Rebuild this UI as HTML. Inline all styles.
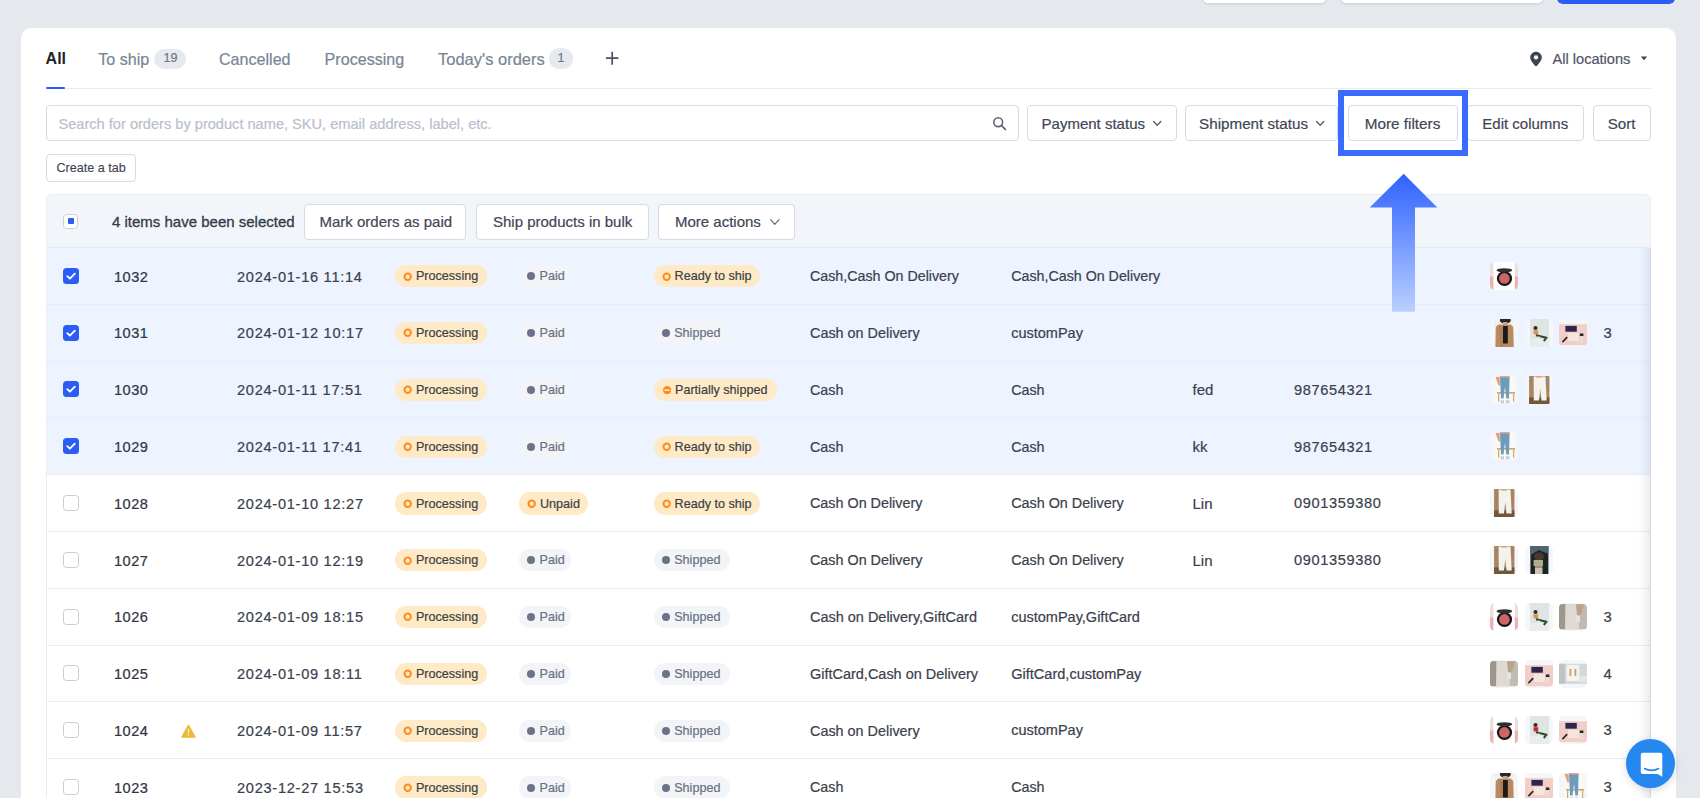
<!DOCTYPE html>
<html><head><meta charset="utf-8"><style>
html,body{margin:0;padding:0;}
body{width:1700px;height:798px;overflow:hidden;position:relative;background:#e5e8ec;font-family:"Liberation Sans",sans-serif;}
.t{position:absolute;line-height:1;white-space:nowrap;}
.pill{position:absolute;background:#e6e9ef;border-radius:10px;}
.box{position:absolute;background:#fff;border:1px solid #d5dae3;border-radius:4px;box-sizing:border-box;}
.bdg{position:absolute;height:22.3px;border-radius:11.2px;}
.th{position:absolute;width:28px;height:28px;border-radius:5px;overflow:hidden;}
.th svg{display:block}
</style></head><body>
<div style="position:absolute;left:1201.5px;top:-30px;width:125px;height:33.8px;background:#fff;border:1px solid #d3d8e1;border-radius:6px;box-sizing:border-box;box-shadow:0 1px 1px rgba(0,0,0,.06)"></div>
<div style="position:absolute;left:1339.7px;top:-30px;width:204.5px;height:33.8px;background:#fff;border:1px solid #d3d8e1;border-radius:6px;box-sizing:border-box;box-shadow:0 1px 1px rgba(0,0,0,.06)"></div>
<div style="position:absolute;left:1557.4px;top:-30px;width:118px;height:34px;background:#2b5cf6;border-radius:6px"></div>
<div style="position:absolute;left:21px;top:28px;width:1655px;height:900px;background:#fff;border-radius:10px"></div>
<div class="t" style="left:45.60px;top:51.46px;font-size:16px;color:#1f2329;font-weight:700;">All</div>
<div class="t" style="left:98.30px;top:50.87px;font-size:16.1px;color:#7a8497;font-weight:400;-webkit-text-stroke:0.2px #7a8497;">To ship</div>
<div class="pill" style="left:154px;top:48.5px;width:31.5px;height:20px;"></div>
<div class="t" style="left:163.50px;top:51.92px;font-size:12.5px;color:#6f7787;font-weight:400;-webkit-text-stroke:0.2px #6f7787;width:14px;">19</div>
<div class="t" style="left:219.00px;top:50.87px;font-size:16.1px;color:#7a8497;font-weight:400;-webkit-text-stroke:0.2px #7a8497;">Cancelled</div>
<div class="t" style="left:324.60px;top:50.87px;font-size:16.1px;color:#7a8497;font-weight:400;-webkit-text-stroke:0.2px #7a8497;">Processing</div>
<div class="t" style="left:438.00px;top:50.83px;font-size:16.5px;color:#7a8497;font-weight:400;-webkit-text-stroke:0.2px #7a8497;">Today&#39;s orders</div>
<div class="pill" style="left:549.2px;top:48.4px;width:24.3px;height:20.3px;"></div>
<div class="t" style="left:557.50px;top:51.92px;font-size:12.5px;color:#6f7787;font-weight:400;-webkit-text-stroke:0.2px #6f7787;">1</div>
<svg style="position:absolute;left:604px;top:50px" width="17" height="17" viewBox="0 0 17 17"><path d="M8.2 1.7V14.7M1.9 8.2H14.4" stroke="#4b5263" stroke-width="1.7"/></svg>
<div style="position:absolute;left:46px;top:88px;width:1605px;height:1px;background:#e8ebf1"></div>
<div style="position:absolute;left:45.5px;top:86.8px;width:19.5px;height:2.3px;background:#2a5cf7;border-radius:1px"></div>
<svg style="position:absolute;left:1529px;top:50.5px" width="14" height="16" viewBox="0 0 14 16"><path d="M7 0.8C3.8 0.8 1.2 3.3 1.2 6.4C1.2 10.3 7 15.4 7 15.4S12.8 10.3 12.8 6.4C12.8 3.3 10.2 0.8 7 0.8Z" fill="#3e4555"/><circle cx="7" cy="6.4" r="2.1" fill="#fff"/></svg>
<div class="t" style="left:1552.50px;top:52.24px;font-size:14.6px;color:#4f5667;font-weight:400;-webkit-text-stroke:0.2px #4f5667;">All locations</div>
<svg style="position:absolute;left:1640px;top:56px" width="8" height="5" viewBox="0 0 8 5"><path d="M0.8 0.5H7.2L4 4.2Z" fill="#3e4555"/></svg>
<div class="box" style="left:46px;top:105.1px;width:972.5px;height:36.2px;"></div>
<div class="t" style="left:58.50px;top:117.24px;font-size:14.6px;color:#b9c0cc;font-weight:400;-webkit-text-stroke:0.2px #b9c0cc;">Search for orders by product name, SKU, email address, label, etc.</div>
<svg style="position:absolute;left:992px;top:116px" width="15" height="15" viewBox="0 0 15 15"><circle cx="6.2" cy="6.2" r="4.4" fill="none" stroke="#5e6575" stroke-width="1.6"/><path d="M9.4 9.4L13.4 13.4" stroke="#5e6575" stroke-width="1.7" stroke-linecap="round"/></svg>
<div class="box" style="left:1027.2px;top:105.1px;width:149.5px;height:36.2px;"></div>
<div class="t" style="left:1041.60px;top:116.00px;font-size:15.0px;color:#3f4655;font-weight:400;-webkit-text-stroke:0.2px #3f4655;">Payment status</div>
<svg style="position:absolute;left:1152px;top:119.6px" width="10.4" height="7.2" viewBox="0 0 10.4 7.2"><path d="M1.6 1.6L5.2 5.2L8.8 1.6" fill="none" stroke="#555c6b" stroke-width="1.4" stroke-linecap="round" stroke-linejoin="round"/></svg>
<div class="box" style="left:1185.3px;top:105.1px;width:152.5px;height:36.2px;"></div>
<div class="t" style="left:1199.10px;top:115.83px;font-size:15.2px;color:#3f4655;font-weight:400;-webkit-text-stroke:0.2px #3f4655;">Shipment status</div>
<svg style="position:absolute;left:1315px;top:119.6px" width="10.4" height="7.2" viewBox="0 0 10.4 7.2"><path d="M1.6 1.6L5.2 5.2L8.8 1.6" fill="none" stroke="#555c6b" stroke-width="1.4" stroke-linecap="round" stroke-linejoin="round"/></svg>
<div class="box" style="left:1347.9px;top:105.1px;width:109.7px;height:36.2px;"></div>
<div class="t" style="left:1364.70px;top:115.75px;font-size:15.3px;color:#3f4655;font-weight:400;-webkit-text-stroke:0.2px #3f4655;">More filters</div>
<div class="box" style="left:1467px;top:105.1px;width:116.7px;height:36.2px;"></div>
<div class="t" style="left:1482.30px;top:116.00px;font-size:15.0px;color:#3f4655;font-weight:400;-webkit-text-stroke:0.2px #3f4655;">Edit columns</div>
<div class="box" style="left:1592.7px;top:105.1px;width:58.2px;height:36.2px;"></div>
<div class="t" style="left:1607.80px;top:115.92px;font-size:15.1px;color:#3f4655;font-weight:400;-webkit-text-stroke:0.2px #3f4655;">Sort</div>
<div style="position:absolute;left:1338px;top:90px;width:130px;height:65.6px;border:6px solid #3a6bff;box-sizing:border-box"></div>
<div class="box" style="left:46px;top:154.2px;width:89.6px;height:27.5px;"></div>
<div class="t" style="left:56.40px;top:161.73px;font-size:12.6px;color:#3d4350;font-weight:400;-webkit-text-stroke:0.12px #3d4350;">Create a tab</div>
<div style="position:absolute;left:46px;top:194.4px;width:1604.7px;height:53.2px;background:#f2f5fa;border-radius:7px 7px 0 0"></div>
<div style="position:absolute;left:46px;top:247.1px;width:1604.7px;height:1px;background:#e6eaf0"></div>
<div style="position:absolute;left:63.4px;top:213.6px;width:15px;height:15px;border:1.4px solid #c8cfdb;border-radius:3.5px;background:#fff;box-sizing:border-box"></div>
<div style="position:absolute;left:68px;top:218.2px;width:6px;height:6px;background:#2a5cf6;border-radius:1px"></div>
<div class="t" style="left:112.00px;top:214.00px;font-size:15px;color:#343a46;font-weight:400;-webkit-text-stroke:0.3px #343a46;">4 items have been selected</div>
<div class="box" style="left:303.6px;top:203.8px;width:162.7px;height:36px;"></div>
<div class="t" style="left:319.50px;top:214.20px;font-size:15px;color:#3f4655;font-weight:400;-webkit-text-stroke:0.2px #3f4655;">Mark orders as paid</div>
<div class="box" style="left:476px;top:203.8px;width:173.2px;height:36px;"></div>
<div class="t" style="left:493.00px;top:214.20px;font-size:15px;color:#3f4655;font-weight:400;-webkit-text-stroke:0.2px #3f4655;">Ship products in bulk</div>
<div class="box" style="left:658.4px;top:203.8px;width:137.1px;height:36px;"></div>
<div class="t" style="left:675.00px;top:214.20px;font-size:15px;color:#3f4655;font-weight:400;-webkit-text-stroke:0.2px #3f4655;">More actions</div>
<svg style="position:absolute;left:768.7px;top:217.6px" width="11.6" height="8.4" viewBox="0 0 11.6 8.4"><path d="M1.6 1.6L5.8 6.4L10.0 1.6" fill="none" stroke="#5f6676" stroke-width="1.1" stroke-linecap="round" stroke-linejoin="round"/></svg>
<div style="position:absolute;left:46px;top:247.60px;width:1604.7px;height:56.8px;background:#edf4ff;"></div>
<svg style="position:absolute;left:63px;top:267.80px" width="16" height="16" viewBox="0 0 16 16"><rect width="16" height="16" rx="3.5" fill="#2c5cf6"/><path d="M4.3 8.2L6.9 10.7L11.8 5.6" fill="none" stroke="#fff" stroke-width="1.8" stroke-linecap="round" stroke-linejoin="round"/></svg>
<div class="t" style="left:114.00px;top:269.64px;font-size:14.6px;color:#30353f;font-weight:400;-webkit-text-stroke:0.22px #30353f;letter-spacing:0.5px;">1032</div>
<div class="t" style="left:237.00px;top:269.64px;font-size:14.6px;color:#3b404b;font-weight:400;letter-spacing:0.72px;-webkit-text-stroke:0.2px #3b404b;">2024-01-16 11:14</div>
<div class="bdg" style="left:395.3px;top:265.20px;width:91.7px;background:#feeac6"></div><svg style="position:absolute;left:403.00px;top:271.60px" width="9.4" height="9.4" viewBox="0 0 9.4 9.4"><circle cx="4.7" cy="4.7" r="3.2" fill="none" stroke="#ff8a1e" stroke-width="2"/></svg><div class="t" style="left:415.90px;top:270.33px;font-size:12.6px;color:#3c3f46;font-weight:400;-webkit-text-stroke:0.2px #3c3f46;">Processing</div>
<div class="bdg" style="left:519.4px;top:265.20px;width:51.8px;background:#f2f4f8"></div><div style="position:absolute;left:527.10px;top:272.30px;width:8.2px;height:8.2px;border-radius:50%;background:#6a7387"></div><div class="t" style="left:539.60px;top:270.33px;font-size:12.6px;color:#687184;font-weight:400;-webkit-text-stroke:0.2px #687184;">Paid</div>
<div class="bdg" style="left:654px;top:265.20px;width:106.3px;background:#feeac6"></div><svg style="position:absolute;left:661.70px;top:271.60px" width="9.4" height="9.4" viewBox="0 0 9.4 9.4"><circle cx="4.7" cy="4.7" r="3.2" fill="none" stroke="#ff8a1e" stroke-width="2"/></svg><div class="t" style="left:674.60px;top:270.33px;font-size:12.6px;color:#3c3f46;font-weight:400;-webkit-text-stroke:0.2px #3c3f46;">Ready to ship</div>
<div class="t" style="left:810.00px;top:269.24px;font-size:14.25px;color:#3b404b;font-weight:400;-webkit-text-stroke:0.2px #3b404b;">Cash,Cash On Delivery</div>
<div class="t" style="left:1011.20px;top:269.24px;font-size:14.25px;color:#3b404b;font-weight:400;-webkit-text-stroke:0.2px #3b404b;">Cash,Cash On Delivery</div>
<div class="th" style="left:1490.0px;top:262.0px"><svg width="28" height="28" viewBox="0 0 28 28"><rect width="28" height="28" fill="#fff"/><rect x="0" y="0" width="3.4" height="14.3" fill="#ebdfda"/><rect x="0" y="14.3" width="3.4" height="13.7" fill="#eeb0b1"/><rect x="24.8" y="0" width="3.2" height="14.3" fill="#ebdfda"/><rect x="24.8" y="14.3" width="3.2" height="13.7" fill="#eeb0b1"/><circle cx="14.5" cy="16.5" r="7.6" fill="#171515"/><circle cx="14.4" cy="16.4" r="5.3" fill="#cb6568"/><ellipse cx="14.4" cy="8.3" rx="7.9" ry="2.1" fill="#303033"/></svg></div>
<div style="position:absolute;left:46px;top:304.40px;width:1604.7px;height:56.8px;background:#edf4ff;"></div>
<svg style="position:absolute;left:63px;top:324.60px" width="16" height="16" viewBox="0 0 16 16"><rect width="16" height="16" rx="3.5" fill="#2c5cf6"/><path d="M4.3 8.2L6.9 10.7L11.8 5.6" fill="none" stroke="#fff" stroke-width="1.8" stroke-linecap="round" stroke-linejoin="round"/></svg>
<div class="t" style="left:114.00px;top:326.44px;font-size:14.6px;color:#30353f;font-weight:400;-webkit-text-stroke:0.22px #30353f;letter-spacing:0.5px;">1031</div>
<div class="t" style="left:237.00px;top:326.44px;font-size:14.6px;color:#3b404b;font-weight:400;letter-spacing:0.72px;-webkit-text-stroke:0.2px #3b404b;">2024-01-12 10:17</div>
<div class="bdg" style="left:395.3px;top:322.00px;width:91.7px;background:#feeac6"></div><svg style="position:absolute;left:403.00px;top:328.40px" width="9.4" height="9.4" viewBox="0 0 9.4 9.4"><circle cx="4.7" cy="4.7" r="3.2" fill="none" stroke="#ff8a1e" stroke-width="2"/></svg><div class="t" style="left:415.90px;top:327.13px;font-size:12.6px;color:#3c3f46;font-weight:400;-webkit-text-stroke:0.2px #3c3f46;">Processing</div>
<div class="bdg" style="left:519.4px;top:322.00px;width:51.8px;background:#f2f4f8"></div><div style="position:absolute;left:527.10px;top:329.10px;width:8.2px;height:8.2px;border-radius:50%;background:#6a7387"></div><div class="t" style="left:539.60px;top:327.13px;font-size:12.6px;color:#687184;font-weight:400;-webkit-text-stroke:0.2px #687184;">Paid</div>
<div class="bdg" style="left:654px;top:322.00px;width:76px;background:#f2f4f8"></div><div style="position:absolute;left:661.70px;top:329.10px;width:8.2px;height:8.2px;border-radius:50%;background:#6a7387"></div><div class="t" style="left:674.20px;top:327.13px;font-size:12.6px;color:#687184;font-weight:400;-webkit-text-stroke:0.2px #687184;">Shipped</div>
<div class="t" style="left:810.00px;top:325.91px;font-size:14.4px;color:#3b404b;font-weight:400;-webkit-text-stroke:0.2px #3b404b;">Cash on Delivery</div>
<div class="t" style="left:1011.20px;top:325.83px;font-size:14.5px;color:#3b404b;font-weight:400;-webkit-text-stroke:0.2px #3b404b;">customPay</div>
<div class="th" style="left:1490.0px;top:318.79999999999995px"><svg width="28" height="28" viewBox="0 0 28 28"><rect width="28" height="28" fill="#f5f6fa"/><rect x="4.6" y="0" width="19.8" height="28" fill="#f3f1ef"/><path d="M5.8 8L8.5 5.5H20.5L23.2 8L23.8 28H5.4Z" fill="#b98b60"/><path d="M9 6L13 9V28H11Z" fill="#a87a52" opacity=".6"/><rect x="13" y="7" width="4.8" height="17.5" fill="#1c1a1a"/><ellipse cx="15.3" cy="1.2" rx="5.4" ry="3.6" fill="#2c2421"/><rect x="13" y="3" width="4.5" height="3" fill="#c8a38d"/></svg></div>
<div class="th" style="left:1524.5px;top:318.79999999999995px"><svg width="28" height="28" viewBox="0 0 28 28"><rect width="28" height="28" fill="#f5f6fa"/><rect x="5.1" y="0" width="19" height="28" fill="#dfe4e5"/><rect x="5.1" y="20" width="19" height="8" fill="#e9ecec"/><circle cx="10.5" cy="9" r="2.1" fill="#3b2c26"/><path d="M8.3 11.2H13.4L13 15.5H8.8Z" fill="#d39a4a"/><path d="M11 16.3L21.5 18.7L18.8 22" stroke="#2e4a2b" stroke-width="2" fill="none" stroke-linejoin="round"/><path d="M14 17V24" stroke="#f2f2f0" stroke-width="0.8"/></svg></div>
<div class="th" style="left:1559.0px;top:318.79999999999995px"><svg width="28" height="28" viewBox="0 0 28 28"><rect width="28" height="28" fill="#f5f6fa"/><rect x="0" y="5.2" width="28" height="21" fill="#f1cec7"/><rect x="6.4" y="6.9" width="11.4" height="5.8" fill="#2f2450"/><rect x="20.8" y="14.5" width="3.6" height="2.6" fill="#2a2424"/><rect x="21" y="17.1" width="3.2" height="6.5" fill="#eadbd5"/><rect x="9" y="14" width="11" height="8" fill="#f6e4de"/><path d="M3.4 23.1L8.2 18.1" stroke="#2b2222" stroke-width="1.6"/></svg></div>
<div class="t" style="left:1603.40px;top:325.87px;font-size:14.8px;color:#3b404b;font-weight:400;-webkit-text-stroke:0.2px #3b404b;">3</div>
<div style="position:absolute;left:46px;top:361.20px;width:1604.7px;height:56.8px;background:#edf4ff;"></div>
<svg style="position:absolute;left:63px;top:381.40px" width="16" height="16" viewBox="0 0 16 16"><rect width="16" height="16" rx="3.5" fill="#2c5cf6"/><path d="M4.3 8.2L6.9 10.7L11.8 5.6" fill="none" stroke="#fff" stroke-width="1.8" stroke-linecap="round" stroke-linejoin="round"/></svg>
<div class="t" style="left:114.00px;top:383.24px;font-size:14.6px;color:#30353f;font-weight:400;-webkit-text-stroke:0.22px #30353f;letter-spacing:0.5px;">1030</div>
<div class="t" style="left:237.00px;top:383.24px;font-size:14.6px;color:#3b404b;font-weight:400;letter-spacing:0.72px;-webkit-text-stroke:0.2px #3b404b;">2024-01-11 17:51</div>
<div class="bdg" style="left:395.3px;top:378.80px;width:91.7px;background:#feeac6"></div><svg style="position:absolute;left:403.00px;top:385.20px" width="9.4" height="9.4" viewBox="0 0 9.4 9.4"><circle cx="4.7" cy="4.7" r="3.2" fill="none" stroke="#ff8a1e" stroke-width="2"/></svg><div class="t" style="left:415.90px;top:383.93px;font-size:12.6px;color:#3c3f46;font-weight:400;-webkit-text-stroke:0.2px #3c3f46;">Processing</div>
<div class="bdg" style="left:519.4px;top:378.80px;width:51.8px;background:#f2f4f8"></div><div style="position:absolute;left:527.10px;top:385.90px;width:8.2px;height:8.2px;border-radius:50%;background:#6a7387"></div><div class="t" style="left:539.60px;top:383.93px;font-size:12.6px;color:#687184;font-weight:400;-webkit-text-stroke:0.2px #687184;">Paid</div>
<div class="bdg" style="left:654.4px;top:378.80px;width:122.6px;background:#feeac6"></div><svg style="position:absolute;left:662.60px;top:385.90px" width="8.3" height="8.3" viewBox="0 0 8.3 8.3"><circle cx="4.15" cy="4.15" r="4.15" fill="#ff8a1e"/><rect x="1.6" y="3.5" width="5.1" height="1.3" fill="#fff"/></svg><div class="t" style="left:675.00px;top:383.93px;font-size:12.6px;color:#3c3f46;font-weight:400;-webkit-text-stroke:0.2px #3c3f46;">Partially shipped</div>
<div class="t" style="left:810.00px;top:382.80px;font-size:14.3px;color:#3b404b;font-weight:400;-webkit-text-stroke:0.2px #3b404b;">Cash</div>
<div class="t" style="left:1011.20px;top:382.80px;font-size:14.3px;color:#3b404b;font-weight:400;-webkit-text-stroke:0.2px #3b404b;">Cash</div>
<div class="t" style="left:1192.50px;top:382.20px;font-size:15.0px;color:#3b404b;font-weight:400;-webkit-text-stroke:0.2px #3b404b;">fed</div>
<div class="t" style="left:1294.00px;top:382.84px;font-size:14.6px;color:#3b404b;font-weight:400;letter-spacing:0.64px;-webkit-text-stroke:0.2px #3b404b;">987654321</div>
<div class="th" style="left:1490.0px;top:375.59999999999997px"><svg width="28" height="28" viewBox="0 0 28 28"><rect width="28" height="28" fill="#f5f6fa"/><rect x="5" y="0" width="20" height="28" fill="#faf8f4"/><rect x="7" y="16" width="18" height="1.6" fill="#c9a96c"/><rect x="8" y="17.6" width="1.2" height="8" fill="#c9a96c"/><rect x="23" y="17.6" width="1.2" height="8" fill="#c9a96c"/><path d="M5.5 1L9.5 0.8L10 9.5L8.5 9.6Z" fill="#d9a382"/><path d="M10 1H19.6L19 22.4H16.4L15 11L13.5 22.4H11Z" fill="#6d9cba"/><rect x="10" y="0" width="9.6" height="1.4" fill="#e9a594"/><rect x="10.6" y="24.3" width="3.5" height="3" fill="#c9ccce"/><rect x="16" y="24.3" width="3.5" height="3" fill="#c9ccce"/></svg></div>
<div class="th" style="left:1524.5px;top:375.59999999999997px"><svg width="28" height="28" viewBox="0 0 28 28"><rect width="28" height="28" fill="#f5f6fa"/><rect x="4.1" y="0" width="20.3" height="28" fill="#a98460"/><rect x="4.1" y="21.4" width="20.3" height="6.6" fill="#735539"/><rect x="4.1" y="4" width="20.3" height="1" fill="#7a8a84" opacity=".6"/><path d="M8.6 0.6H20.5L21.7 24.5H16.5L15.3 13L14 24.5H8.8Z" fill="#f3f2ed"/><rect x="11" y="0" width="6" height="1.6" fill="#dfa384"/></svg></div>
<div style="position:absolute;left:46px;top:418.00px;width:1604.7px;height:56.8px;background:#edf4ff;"></div>
<svg style="position:absolute;left:63px;top:438.20px" width="16" height="16" viewBox="0 0 16 16"><rect width="16" height="16" rx="3.5" fill="#2c5cf6"/><path d="M4.3 8.2L6.9 10.7L11.8 5.6" fill="none" stroke="#fff" stroke-width="1.8" stroke-linecap="round" stroke-linejoin="round"/></svg>
<div class="t" style="left:114.00px;top:440.04px;font-size:14.6px;color:#30353f;font-weight:400;-webkit-text-stroke:0.22px #30353f;letter-spacing:0.5px;">1029</div>
<div class="t" style="left:237.00px;top:440.04px;font-size:14.6px;color:#3b404b;font-weight:400;letter-spacing:0.72px;-webkit-text-stroke:0.2px #3b404b;">2024-01-11 17:41</div>
<div class="bdg" style="left:395.3px;top:435.60px;width:91.7px;background:#feeac6"></div><svg style="position:absolute;left:403.00px;top:442.00px" width="9.4" height="9.4" viewBox="0 0 9.4 9.4"><circle cx="4.7" cy="4.7" r="3.2" fill="none" stroke="#ff8a1e" stroke-width="2"/></svg><div class="t" style="left:415.90px;top:440.73px;font-size:12.6px;color:#3c3f46;font-weight:400;-webkit-text-stroke:0.2px #3c3f46;">Processing</div>
<div class="bdg" style="left:519.4px;top:435.60px;width:51.8px;background:#f2f4f8"></div><div style="position:absolute;left:527.10px;top:442.70px;width:8.2px;height:8.2px;border-radius:50%;background:#6a7387"></div><div class="t" style="left:539.60px;top:440.73px;font-size:12.6px;color:#687184;font-weight:400;-webkit-text-stroke:0.2px #687184;">Paid</div>
<div class="bdg" style="left:654px;top:435.60px;width:106.3px;background:#feeac6"></div><svg style="position:absolute;left:661.70px;top:442.00px" width="9.4" height="9.4" viewBox="0 0 9.4 9.4"><circle cx="4.7" cy="4.7" r="3.2" fill="none" stroke="#ff8a1e" stroke-width="2"/></svg><div class="t" style="left:674.60px;top:440.73px;font-size:12.6px;color:#3c3f46;font-weight:400;-webkit-text-stroke:0.2px #3c3f46;">Ready to ship</div>
<div class="t" style="left:810.00px;top:439.60px;font-size:14.3px;color:#3b404b;font-weight:400;-webkit-text-stroke:0.2px #3b404b;">Cash</div>
<div class="t" style="left:1011.20px;top:439.60px;font-size:14.3px;color:#3b404b;font-weight:400;-webkit-text-stroke:0.2px #3b404b;">Cash</div>
<div class="t" style="left:1192.50px;top:439.00px;font-size:15.0px;color:#3b404b;font-weight:400;-webkit-text-stroke:0.2px #3b404b;">kk</div>
<div class="t" style="left:1294.00px;top:439.64px;font-size:14.6px;color:#3b404b;font-weight:400;letter-spacing:0.64px;-webkit-text-stroke:0.2px #3b404b;">987654321</div>
<div class="th" style="left:1490.0px;top:432.4px"><svg width="28" height="28" viewBox="0 0 28 28"><rect width="28" height="28" fill="#f5f6fa"/><rect x="5" y="0" width="20" height="28" fill="#faf8f4"/><rect x="7" y="16" width="18" height="1.6" fill="#c9a96c"/><rect x="8" y="17.6" width="1.2" height="8" fill="#c9a96c"/><rect x="23" y="17.6" width="1.2" height="8" fill="#c9a96c"/><path d="M5.5 1L9.5 0.8L10 9.5L8.5 9.6Z" fill="#d9a382"/><path d="M10 1H19.6L19 22.4H16.4L15 11L13.5 22.4H11Z" fill="#6d9cba"/><rect x="10" y="0" width="9.6" height="1.4" fill="#e9a594"/><rect x="10.6" y="24.3" width="3.5" height="3" fill="#c9ccce"/><rect x="16" y="24.3" width="3.5" height="3" fill="#c9ccce"/></svg></div>
<div style="position:absolute;left:46px;top:474.80px;width:1604.7px;height:56.8px;background:#fff;"></div>
<div style="position:absolute;left:63px;top:495.00px;width:16px;height:16px;border:1.6px solid #c6cdd9;border-radius:3.5px;box-sizing:border-box;background:#fff"></div>
<div class="t" style="left:114.00px;top:496.84px;font-size:14.6px;color:#30353f;font-weight:400;-webkit-text-stroke:0.22px #30353f;letter-spacing:0.5px;">1028</div>
<div class="t" style="left:237.00px;top:496.84px;font-size:14.6px;color:#3b404b;font-weight:400;letter-spacing:0.72px;-webkit-text-stroke:0.2px #3b404b;">2024-01-10 12:27</div>
<div class="bdg" style="left:395.3px;top:492.40px;width:91.7px;background:#feeac6"></div><svg style="position:absolute;left:403.00px;top:498.80px" width="9.4" height="9.4" viewBox="0 0 9.4 9.4"><circle cx="4.7" cy="4.7" r="3.2" fill="none" stroke="#ff8a1e" stroke-width="2"/></svg><div class="t" style="left:415.90px;top:497.53px;font-size:12.6px;color:#3c3f46;font-weight:400;-webkit-text-stroke:0.2px #3c3f46;">Processing</div>
<div class="bdg" style="left:519.4px;top:492.40px;width:69px;background:#feeac6"></div><svg style="position:absolute;left:527.10px;top:498.80px" width="9.4" height="9.4" viewBox="0 0 9.4 9.4"><circle cx="4.7" cy="4.7" r="3.2" fill="none" stroke="#ff8a1e" stroke-width="2"/></svg><div class="t" style="left:540.00px;top:497.53px;font-size:12.6px;color:#3c3f46;font-weight:400;-webkit-text-stroke:0.2px #3c3f46;">Unpaid</div>
<div class="bdg" style="left:654px;top:492.40px;width:106.3px;background:#feeac6"></div><svg style="position:absolute;left:661.70px;top:498.80px" width="9.4" height="9.4" viewBox="0 0 9.4 9.4"><circle cx="4.7" cy="4.7" r="3.2" fill="none" stroke="#ff8a1e" stroke-width="2"/></svg><div class="t" style="left:674.60px;top:497.53px;font-size:12.6px;color:#3c3f46;font-weight:400;-webkit-text-stroke:0.2px #3c3f46;">Ready to ship</div>
<div class="t" style="left:810.00px;top:496.35px;font-size:14.35px;color:#3b404b;font-weight:400;-webkit-text-stroke:0.2px #3b404b;">Cash On Delivery</div>
<div class="t" style="left:1011.20px;top:496.35px;font-size:14.35px;color:#3b404b;font-weight:400;-webkit-text-stroke:0.2px #3b404b;">Cash On Delivery</div>
<div class="t" style="left:1192.50px;top:495.80px;font-size:15.0px;color:#3b404b;font-weight:400;-webkit-text-stroke:0.2px #3b404b;">Lin</div>
<div class="t" style="left:1294.00px;top:496.44px;font-size:14.6px;color:#3b404b;font-weight:400;letter-spacing:0.64px;-webkit-text-stroke:0.2px #3b404b;">0901359380</div>
<div class="th" style="left:1490.0px;top:489.19999999999993px"><svg width="28" height="28" viewBox="0 0 28 28"><rect width="28" height="28" fill="#f5f6fa"/><rect x="4.1" y="0" width="20.3" height="28" fill="#a98460"/><rect x="4.1" y="21.4" width="20.3" height="6.6" fill="#735539"/><rect x="4.1" y="4" width="20.3" height="1" fill="#7a8a84" opacity=".6"/><path d="M8.6 0.6H20.5L21.7 24.5H16.5L15.3 13L14 24.5H8.8Z" fill="#f3f2ed"/><rect x="11" y="0" width="6" height="1.6" fill="#dfa384"/></svg></div>
<div style="position:absolute;left:46px;top:531.60px;width:1604.7px;height:56.8px;background:#fff;"></div>
<div style="position:absolute;left:63px;top:551.80px;width:16px;height:16px;border:1.6px solid #c6cdd9;border-radius:3.5px;box-sizing:border-box;background:#fff"></div>
<div class="t" style="left:114.00px;top:553.64px;font-size:14.6px;color:#30353f;font-weight:400;-webkit-text-stroke:0.22px #30353f;letter-spacing:0.5px;">1027</div>
<div class="t" style="left:237.00px;top:553.64px;font-size:14.6px;color:#3b404b;font-weight:400;letter-spacing:0.72px;-webkit-text-stroke:0.2px #3b404b;">2024-01-10 12:19</div>
<div class="bdg" style="left:395.3px;top:549.20px;width:91.7px;background:#feeac6"></div><svg style="position:absolute;left:403.00px;top:555.60px" width="9.4" height="9.4" viewBox="0 0 9.4 9.4"><circle cx="4.7" cy="4.7" r="3.2" fill="none" stroke="#ff8a1e" stroke-width="2"/></svg><div class="t" style="left:415.90px;top:554.33px;font-size:12.6px;color:#3c3f46;font-weight:400;-webkit-text-stroke:0.2px #3c3f46;">Processing</div>
<div class="bdg" style="left:519.4px;top:549.20px;width:51.8px;background:#f2f4f8"></div><div style="position:absolute;left:527.10px;top:556.30px;width:8.2px;height:8.2px;border-radius:50%;background:#6a7387"></div><div class="t" style="left:539.60px;top:554.33px;font-size:12.6px;color:#687184;font-weight:400;-webkit-text-stroke:0.2px #687184;">Paid</div>
<div class="bdg" style="left:654px;top:549.20px;width:76px;background:#f2f4f8"></div><div style="position:absolute;left:661.70px;top:556.30px;width:8.2px;height:8.2px;border-radius:50%;background:#6a7387"></div><div class="t" style="left:674.20px;top:554.33px;font-size:12.6px;color:#687184;font-weight:400;-webkit-text-stroke:0.2px #687184;">Shipped</div>
<div class="t" style="left:810.00px;top:553.15px;font-size:14.35px;color:#3b404b;font-weight:400;-webkit-text-stroke:0.2px #3b404b;">Cash On Delivery</div>
<div class="t" style="left:1011.20px;top:553.15px;font-size:14.35px;color:#3b404b;font-weight:400;-webkit-text-stroke:0.2px #3b404b;">Cash On Delivery</div>
<div class="t" style="left:1192.50px;top:552.60px;font-size:15.0px;color:#3b404b;font-weight:400;-webkit-text-stroke:0.2px #3b404b;">Lin</div>
<div class="t" style="left:1294.00px;top:553.24px;font-size:14.6px;color:#3b404b;font-weight:400;letter-spacing:0.64px;-webkit-text-stroke:0.2px #3b404b;">0901359380</div>
<div class="th" style="left:1490.0px;top:546.0px"><svg width="28" height="28" viewBox="0 0 28 28"><rect width="28" height="28" fill="#f5f6fa"/><rect x="4.1" y="0" width="20.3" height="28" fill="#a98460"/><rect x="4.1" y="21.4" width="20.3" height="6.6" fill="#735539"/><rect x="4.1" y="4" width="20.3" height="1" fill="#7a8a84" opacity=".6"/><path d="M8.6 0.6H20.5L21.7 24.5H16.5L15.3 13L14 24.5H8.8Z" fill="#f3f2ed"/><rect x="11" y="0" width="6" height="1.6" fill="#dfa384"/></svg></div>
<div class="th" style="left:1524.5px;top:546.0px"><svg width="28" height="28" viewBox="0 0 28 28"><rect width="28" height="28" fill="#f5f6fa"/><rect x="5.4" y="0" width="18" height="28" fill="#1d2524"/><path d="M5.4 0H23.4V8L14 4L5.4 9Z" fill="#4e6471"/><ellipse cx="14" cy="10.5" rx="5" ry="4" fill="#4a3a30"/><rect x="8.6" y="14" width="9.4" height="6" fill="#aeab8f"/><rect x="10" y="20" width="7.5" height="2" fill="#b08a70"/><rect x="10" y="22" width="7.5" height="6" fill="#c6c4bb"/></svg></div>
<div style="position:absolute;left:46px;top:588.40px;width:1604.7px;height:56.8px;background:#fff;"></div>
<div style="position:absolute;left:63px;top:608.60px;width:16px;height:16px;border:1.6px solid #c6cdd9;border-radius:3.5px;box-sizing:border-box;background:#fff"></div>
<div class="t" style="left:114.00px;top:610.44px;font-size:14.6px;color:#30353f;font-weight:400;-webkit-text-stroke:0.22px #30353f;letter-spacing:0.5px;">1026</div>
<div class="t" style="left:237.00px;top:610.44px;font-size:14.6px;color:#3b404b;font-weight:400;letter-spacing:0.72px;-webkit-text-stroke:0.2px #3b404b;">2024-01-09 18:15</div>
<div class="bdg" style="left:395.3px;top:606.00px;width:91.7px;background:#feeac6"></div><svg style="position:absolute;left:403.00px;top:612.40px" width="9.4" height="9.4" viewBox="0 0 9.4 9.4"><circle cx="4.7" cy="4.7" r="3.2" fill="none" stroke="#ff8a1e" stroke-width="2"/></svg><div class="t" style="left:415.90px;top:611.13px;font-size:12.6px;color:#3c3f46;font-weight:400;-webkit-text-stroke:0.2px #3c3f46;">Processing</div>
<div class="bdg" style="left:519.4px;top:606.00px;width:51.8px;background:#f2f4f8"></div><div style="position:absolute;left:527.10px;top:613.10px;width:8.2px;height:8.2px;border-radius:50%;background:#6a7387"></div><div class="t" style="left:539.60px;top:611.13px;font-size:12.6px;color:#687184;font-weight:400;-webkit-text-stroke:0.2px #687184;">Paid</div>
<div class="bdg" style="left:654px;top:606.00px;width:76px;background:#f2f4f8"></div><div style="position:absolute;left:661.70px;top:613.10px;width:8.2px;height:8.2px;border-radius:50%;background:#6a7387"></div><div class="t" style="left:674.20px;top:611.13px;font-size:12.6px;color:#687184;font-weight:400;-webkit-text-stroke:0.2px #687184;">Shipped</div>
<div class="t" style="left:810.00px;top:609.85px;font-size:14.47px;color:#3b404b;font-weight:400;-webkit-text-stroke:0.2px #3b404b;">Cash on Delivery,GiftCard</div>
<div class="t" style="left:1011.20px;top:609.83px;font-size:14.5px;color:#3b404b;font-weight:400;-webkit-text-stroke:0.2px #3b404b;">customPay,GiftCard</div>
<div class="th" style="left:1490.0px;top:602.8px"><svg width="28" height="28" viewBox="0 0 28 28"><rect width="28" height="28" fill="#fff"/><rect x="0" y="0" width="3.4" height="14.3" fill="#ebdfda"/><rect x="0" y="14.3" width="3.4" height="13.7" fill="#eeb0b1"/><rect x="24.8" y="0" width="3.2" height="14.3" fill="#ebdfda"/><rect x="24.8" y="14.3" width="3.2" height="13.7" fill="#eeb0b1"/><circle cx="14.5" cy="16.5" r="7.6" fill="#171515"/><circle cx="14.4" cy="16.4" r="5.3" fill="#cb6568"/><ellipse cx="14.4" cy="8.3" rx="7.9" ry="2.1" fill="#303033"/></svg></div>
<div class="th" style="left:1524.5px;top:602.8px"><svg width="28" height="28" viewBox="0 0 28 28"><rect width="28" height="28" fill="#f5f6fa"/><rect x="5.1" y="0" width="19" height="28" fill="#dfe4e5"/><rect x="5.1" y="20" width="19" height="8" fill="#e9ecec"/><circle cx="10.5" cy="9" r="2.1" fill="#3b2c26"/><path d="M8.3 11.2H13.4L13 15.5H8.8Z" fill="#d39a4a"/><path d="M11 16.3L21.5 18.7L18.8 22" stroke="#2e4a2b" stroke-width="2" fill="none" stroke-linejoin="round"/><path d="M14 17V24" stroke="#f2f2f0" stroke-width="0.8"/></svg></div>
<div class="th" style="left:1559.0px;top:602.8px"><svg width="28" height="28" viewBox="0 0 28 28"><rect width="28" height="28" fill="#f5f6fa"/><rect x="0" y="1.2" width="28" height="25" fill="#c2bbb4"/><rect x="0" y="1.2" width="7" height="25" fill="#9f958b"/><path d="M6.4 1.2H19.2L20 26.2H6Z" fill="#dedad3"/><path d="M17 1.2H25L22 12H18Z" fill="#bba385"/><rect x="17" y="13" width="4" height="6" fill="#e7e3de"/></svg></div>
<div class="t" style="left:1603.40px;top:609.87px;font-size:14.8px;color:#3b404b;font-weight:400;-webkit-text-stroke:0.2px #3b404b;">3</div>
<div style="position:absolute;left:46px;top:645.20px;width:1604.7px;height:56.8px;background:#fff;"></div>
<div style="position:absolute;left:63px;top:665.40px;width:16px;height:16px;border:1.6px solid #c6cdd9;border-radius:3.5px;box-sizing:border-box;background:#fff"></div>
<div class="t" style="left:114.00px;top:667.24px;font-size:14.6px;color:#30353f;font-weight:400;-webkit-text-stroke:0.22px #30353f;letter-spacing:0.5px;">1025</div>
<div class="t" style="left:237.00px;top:667.24px;font-size:14.6px;color:#3b404b;font-weight:400;letter-spacing:0.72px;-webkit-text-stroke:0.2px #3b404b;">2024-01-09 18:11</div>
<div class="bdg" style="left:395.3px;top:662.80px;width:91.7px;background:#feeac6"></div><svg style="position:absolute;left:403.00px;top:669.20px" width="9.4" height="9.4" viewBox="0 0 9.4 9.4"><circle cx="4.7" cy="4.7" r="3.2" fill="none" stroke="#ff8a1e" stroke-width="2"/></svg><div class="t" style="left:415.90px;top:667.93px;font-size:12.6px;color:#3c3f46;font-weight:400;-webkit-text-stroke:0.2px #3c3f46;">Processing</div>
<div class="bdg" style="left:519.4px;top:662.80px;width:51.8px;background:#f2f4f8"></div><div style="position:absolute;left:527.10px;top:669.90px;width:8.2px;height:8.2px;border-radius:50%;background:#6a7387"></div><div class="t" style="left:539.60px;top:667.93px;font-size:12.6px;color:#687184;font-weight:400;-webkit-text-stroke:0.2px #687184;">Paid</div>
<div class="bdg" style="left:654px;top:662.80px;width:76px;background:#f2f4f8"></div><div style="position:absolute;left:661.70px;top:669.90px;width:8.2px;height:8.2px;border-radius:50%;background:#6a7387"></div><div class="t" style="left:674.20px;top:667.93px;font-size:12.6px;color:#687184;font-weight:400;-webkit-text-stroke:0.2px #687184;">Shipped</div>
<div class="t" style="left:810.00px;top:666.64px;font-size:14.48px;color:#3b404b;font-weight:400;-webkit-text-stroke:0.2px #3b404b;">GiftCard,Cash on Delivery</div>
<div class="t" style="left:1011.20px;top:666.58px;font-size:14.55px;color:#3b404b;font-weight:400;-webkit-text-stroke:0.2px #3b404b;">GiftCard,customPay</div>
<div class="th" style="left:1490.0px;top:659.5999999999999px"><svg width="28" height="28" viewBox="0 0 28 28"><rect width="28" height="28" fill="#f5f6fa"/><rect x="0" y="1.2" width="28" height="25" fill="#c2bbb4"/><rect x="0" y="1.2" width="7" height="25" fill="#9f958b"/><path d="M6.4 1.2H19.2L20 26.2H6Z" fill="#dedad3"/><path d="M17 1.2H25L22 12H18Z" fill="#bba385"/><rect x="17" y="13" width="4" height="6" fill="#e7e3de"/></svg></div>
<div class="th" style="left:1524.5px;top:659.5999999999999px"><svg width="28" height="28" viewBox="0 0 28 28"><rect width="28" height="28" fill="#f5f6fa"/><rect x="0" y="5.2" width="28" height="21" fill="#f1cec7"/><rect x="6.4" y="6.9" width="11.4" height="5.8" fill="#2f2450"/><rect x="20.8" y="14.5" width="3.6" height="2.6" fill="#2a2424"/><rect x="21" y="17.1" width="3.2" height="6.5" fill="#eadbd5"/><rect x="9" y="14" width="11" height="8" fill="#f6e4de"/><path d="M3.4 23.1L8.2 18.1" stroke="#2b2222" stroke-width="1.6"/></svg></div>
<div class="th" style="left:1559.0px;top:659.5999999999999px"><svg width="28" height="28" viewBox="0 0 28 28"><rect width="28" height="28" fill="#f5f6fa"/><rect x="0" y="3.8" width="28" height="20" fill="#d4d8d9"/><rect x="0" y="3.8" width="6" height="20" fill="#bfc3c4"/><rect x="7.6" y="4.9" width="12.8" height="16.3" fill="#f5f3ef"/><rect x="10.5" y="9" width="1.8" height="7" fill="#c69f78"/><rect x="15.5" y="9" width="1.8" height="7" fill="#c69f78"/><rect x="20.5" y="16" width="7.5" height="6" fill="#e4e6e6"/></svg></div>
<div class="t" style="left:1603.40px;top:666.67px;font-size:14.8px;color:#3b404b;font-weight:400;-webkit-text-stroke:0.2px #3b404b;">4</div>
<div style="position:absolute;left:46px;top:702.00px;width:1604.7px;height:56.8px;background:#fff;"></div>
<div style="position:absolute;left:63px;top:722.20px;width:16px;height:16px;border:1.6px solid #c6cdd9;border-radius:3.5px;box-sizing:border-box;background:#fff"></div>
<div class="t" style="left:114.00px;top:724.04px;font-size:14.6px;color:#30353f;font-weight:400;-webkit-text-stroke:0.22px #30353f;letter-spacing:0.5px;">1024</div>
<svg style="position:absolute;left:181px;top:724.10px" width="15" height="14" viewBox="0 0 15 14"><path d="M7.5 0.8L14.4 13.2H0.6Z" fill="#ebbb37" stroke="#ebbb37" stroke-width="1" stroke-linejoin="round"/><rect x="6.8" y="4.5" width="1.4" height="4.8" fill="#fff" opacity=".7"/><rect x="6.8" y="10.2" width="1.4" height="1.4" fill="#fff" opacity=".7"/></svg>
<div class="t" style="left:237.00px;top:724.04px;font-size:14.6px;color:#3b404b;font-weight:400;letter-spacing:0.72px;-webkit-text-stroke:0.2px #3b404b;">2024-01-09 11:57</div>
<div class="bdg" style="left:395.3px;top:719.60px;width:91.7px;background:#feeac6"></div><svg style="position:absolute;left:403.00px;top:726.00px" width="9.4" height="9.4" viewBox="0 0 9.4 9.4"><circle cx="4.7" cy="4.7" r="3.2" fill="none" stroke="#ff8a1e" stroke-width="2"/></svg><div class="t" style="left:415.90px;top:724.73px;font-size:12.6px;color:#3c3f46;font-weight:400;-webkit-text-stroke:0.2px #3c3f46;">Processing</div>
<div class="bdg" style="left:519.4px;top:719.60px;width:51.8px;background:#f2f4f8"></div><div style="position:absolute;left:527.10px;top:726.70px;width:8.2px;height:8.2px;border-radius:50%;background:#6a7387"></div><div class="t" style="left:539.60px;top:724.73px;font-size:12.6px;color:#687184;font-weight:400;-webkit-text-stroke:0.2px #687184;">Paid</div>
<div class="bdg" style="left:654px;top:719.60px;width:76px;background:#f2f4f8"></div><div style="position:absolute;left:661.70px;top:726.70px;width:8.2px;height:8.2px;border-radius:50%;background:#6a7387"></div><div class="t" style="left:674.20px;top:724.73px;font-size:12.6px;color:#687184;font-weight:400;-webkit-text-stroke:0.2px #687184;">Shipped</div>
<div class="t" style="left:810.00px;top:723.51px;font-size:14.4px;color:#3b404b;font-weight:400;-webkit-text-stroke:0.2px #3b404b;">Cash on Delivery</div>
<div class="t" style="left:1011.20px;top:723.43px;font-size:14.5px;color:#3b404b;font-weight:400;-webkit-text-stroke:0.2px #3b404b;">customPay</div>
<div class="th" style="left:1490.0px;top:716.4px"><svg width="28" height="28" viewBox="0 0 28 28"><rect width="28" height="28" fill="#fff"/><rect x="0" y="0" width="3.4" height="14.3" fill="#ebdfda"/><rect x="0" y="14.3" width="3.4" height="13.7" fill="#eeb0b1"/><rect x="24.8" y="0" width="3.2" height="14.3" fill="#ebdfda"/><rect x="24.8" y="14.3" width="3.2" height="13.7" fill="#eeb0b1"/><circle cx="14.5" cy="16.5" r="7.6" fill="#171515"/><circle cx="14.4" cy="16.4" r="5.3" fill="#cb6568"/><ellipse cx="14.4" cy="8.3" rx="7.9" ry="2.1" fill="#303033"/></svg></div>
<div class="th" style="left:1524.5px;top:716.4px"><svg width="28" height="28" viewBox="0 0 28 28"><rect width="28" height="28" fill="#f5f6fa"/><rect x="5.1" y="0" width="19" height="28" fill="#dfe4e5"/><rect x="5.1" y="20" width="19" height="8" fill="#e9ecec"/><circle cx="10.5" cy="9" r="2.1" fill="#3b2c26"/><path d="M8.3 11.2H13.4L13 15.5H8.8Z" fill="#c52a2f"/><path d="M11 16.3L21.5 18.7L18.8 22" stroke="#2e4a2b" stroke-width="2" fill="none" stroke-linejoin="round"/><path d="M14 17V24" stroke="#f2f2f0" stroke-width="0.8"/></svg></div>
<div class="th" style="left:1559.0px;top:716.4px"><svg width="28" height="28" viewBox="0 0 28 28"><rect width="28" height="28" fill="#f5f6fa"/><rect x="0" y="5.2" width="28" height="21" fill="#f1cec7"/><rect x="6.4" y="6.9" width="11.4" height="5.8" fill="#2f2450"/><rect x="20.8" y="14.5" width="3.6" height="2.6" fill="#2a2424"/><rect x="21" y="17.1" width="3.2" height="6.5" fill="#eadbd5"/><rect x="9" y="14" width="11" height="8" fill="#f6e4de"/><path d="M3.4 23.1L8.2 18.1" stroke="#2b2222" stroke-width="1.6"/></svg></div>
<div class="t" style="left:1603.40px;top:723.47px;font-size:14.8px;color:#3b404b;font-weight:400;-webkit-text-stroke:0.2px #3b404b;">3</div>
<div style="position:absolute;left:46px;top:758.80px;width:1604.7px;height:56.8px;background:#fff;"></div>
<div style="position:absolute;left:63px;top:779.00px;width:16px;height:16px;border:1.6px solid #c6cdd9;border-radius:3.5px;box-sizing:border-box;background:#fff"></div>
<div class="t" style="left:114.00px;top:780.84px;font-size:14.6px;color:#30353f;font-weight:400;-webkit-text-stroke:0.22px #30353f;letter-spacing:0.5px;">1023</div>
<div class="t" style="left:237.00px;top:780.84px;font-size:14.6px;color:#3b404b;font-weight:400;letter-spacing:0.72px;-webkit-text-stroke:0.2px #3b404b;">2023-12-27 15:53</div>
<div class="bdg" style="left:395.3px;top:776.40px;width:91.7px;background:#feeac6"></div><svg style="position:absolute;left:403.00px;top:782.80px" width="9.4" height="9.4" viewBox="0 0 9.4 9.4"><circle cx="4.7" cy="4.7" r="3.2" fill="none" stroke="#ff8a1e" stroke-width="2"/></svg><div class="t" style="left:415.90px;top:781.53px;font-size:12.6px;color:#3c3f46;font-weight:400;-webkit-text-stroke:0.2px #3c3f46;">Processing</div>
<div class="bdg" style="left:519.4px;top:776.40px;width:51.8px;background:#f2f4f8"></div><div style="position:absolute;left:527.10px;top:783.50px;width:8.2px;height:8.2px;border-radius:50%;background:#6a7387"></div><div class="t" style="left:539.60px;top:781.53px;font-size:12.6px;color:#687184;font-weight:400;-webkit-text-stroke:0.2px #687184;">Paid</div>
<div class="bdg" style="left:654px;top:776.40px;width:76px;background:#f2f4f8"></div><div style="position:absolute;left:661.70px;top:783.50px;width:8.2px;height:8.2px;border-radius:50%;background:#6a7387"></div><div class="t" style="left:674.20px;top:781.53px;font-size:12.6px;color:#687184;font-weight:400;-webkit-text-stroke:0.2px #687184;">Shipped</div>
<div class="t" style="left:810.00px;top:780.40px;font-size:14.3px;color:#3b404b;font-weight:400;-webkit-text-stroke:0.2px #3b404b;">Cash</div>
<div class="t" style="left:1011.20px;top:780.40px;font-size:14.3px;color:#3b404b;font-weight:400;-webkit-text-stroke:0.2px #3b404b;">Cash</div>
<div class="th" style="left:1490.0px;top:773.1999999999999px"><svg width="28" height="28" viewBox="0 0 28 28"><rect width="28" height="28" fill="#f5f6fa"/><rect x="4.6" y="0" width="19.8" height="28" fill="#f3f1ef"/><path d="M5.8 8L8.5 5.5H20.5L23.2 8L23.8 28H5.4Z" fill="#b98b60"/><path d="M9 6L13 9V28H11Z" fill="#a87a52" opacity=".6"/><rect x="13" y="7" width="4.8" height="17.5" fill="#1c1a1a"/><ellipse cx="15.3" cy="1.2" rx="5.4" ry="3.6" fill="#2c2421"/><rect x="13" y="3" width="4.5" height="3" fill="#c8a38d"/></svg></div>
<div class="th" style="left:1524.5px;top:773.1999999999999px"><svg width="28" height="28" viewBox="0 0 28 28"><rect width="28" height="28" fill="#f5f6fa"/><rect x="0" y="5.2" width="28" height="21" fill="#f1cec7"/><rect x="6.4" y="6.9" width="11.4" height="5.8" fill="#2f2450"/><rect x="20.8" y="14.5" width="3.6" height="2.6" fill="#2a2424"/><rect x="21" y="17.1" width="3.2" height="6.5" fill="#eadbd5"/><rect x="9" y="14" width="11" height="8" fill="#f6e4de"/><path d="M3.4 23.1L8.2 18.1" stroke="#2b2222" stroke-width="1.6"/></svg></div>
<div class="th" style="left:1559.0px;top:773.1999999999999px"><svg width="28" height="28" viewBox="0 0 28 28"><rect width="28" height="28" fill="#f5f6fa"/><rect x="5" y="0" width="20" height="28" fill="#faf8f4"/><rect x="7" y="16" width="18" height="1.6" fill="#c9a96c"/><rect x="8" y="17.6" width="1.2" height="8" fill="#c9a96c"/><rect x="23" y="17.6" width="1.2" height="8" fill="#c9a96c"/><path d="M5.5 1L9.5 0.8L10 9.5L8.5 9.6Z" fill="#d9a382"/><path d="M10 1H19.6L19 22.4H16.4L15 11L13.5 22.4H11Z" fill="#6d9cba"/><rect x="10" y="0" width="9.6" height="1.4" fill="#e9a594"/><rect x="10.6" y="24.3" width="3.5" height="3" fill="#c9ccce"/><rect x="16" y="24.3" width="3.5" height="3" fill="#c9ccce"/></svg></div>
<div class="t" style="left:1603.40px;top:780.27px;font-size:14.8px;color:#3b404b;font-weight:400;-webkit-text-stroke:0.2px #3b404b;">3</div>
<div style="position:absolute;left:46px;top:303.80px;width:1604.7px;height:1px;background:#e9ecf2"></div>
<div style="position:absolute;left:46px;top:360.60px;width:1604.7px;height:1px;background:#e9ecf2"></div>
<div style="position:absolute;left:46px;top:417.40px;width:1604.7px;height:1px;background:#e9ecf2"></div>
<div style="position:absolute;left:46px;top:474.20px;width:1604.7px;height:1px;background:#e9ecf2"></div>
<div style="position:absolute;left:46px;top:531.00px;width:1604.7px;height:1px;background:#e9ecf2"></div>
<div style="position:absolute;left:46px;top:587.80px;width:1604.7px;height:1px;background:#e9ecf2"></div>
<div style="position:absolute;left:46px;top:644.60px;width:1604.7px;height:1px;background:#e9ecf2"></div>
<div style="position:absolute;left:46px;top:701.40px;width:1604.7px;height:1px;background:#e9ecf2"></div>
<div style="position:absolute;left:46px;top:758.20px;width:1604.7px;height:1px;background:#e9ecf2"></div>
<div style="position:absolute;left:46px;top:815.00px;width:1604.7px;height:1px;background:#e9ecf2"></div>
<div style="position:absolute;left:45.8px;top:194.2px;width:1605.2px;height:700px;border:1px solid #eaedf3;border-radius:6px;box-sizing:border-box"></div>
<div style="position:absolute;left:1638px;top:247.6px;width:12.7px;height:600px;background:linear-gradient(to right,rgba(40,60,100,0),rgba(40,60,100,.05) 60%,rgba(40,60,100,.11))"></div>
<svg style="position:absolute;left:1360px;top:165px" width="90" height="150" viewBox="1360 165 90 150"><defs><linearGradient id="ag" x1="0" y1="0" x2="0" y2="1"><stop offset="0" stop-color="#2f62ff"/><stop offset="1" stop-color="#bad0ff"/></linearGradient></defs><path d="M1403.7 173.7L1437.3 207.4H1415V311.7H1392V207.4H1369.7Z" fill="url(#ag)"/></svg>
<div style="position:absolute;left:1626px;top:739.4px;width:49px;height:49px;border-radius:50%;background:#2688ef;box-shadow:0 2px 8px rgba(0,0,0,.15)"></div>
<svg style="position:absolute;left:1638.5px;top:751.5px" width="25" height="26" viewBox="0 0 25 26"><path d="M1.8 2.8C1.8 1.6 2.6 0.8 3.8 0.8H21.4C22.6 0.8 23.3 1.6 23.3 2.8V24.7L18.5 22.1H3.8C2.6 22.1 1.8 21.3 1.8 20.1Z" fill="#fff"/><path d="M5.6 16.6C9.5 18.9 15.6 18.9 19.5 16.6" fill="none" stroke="#2688ef" stroke-width="1.7" stroke-linecap="round"/></svg>
</body></html>
